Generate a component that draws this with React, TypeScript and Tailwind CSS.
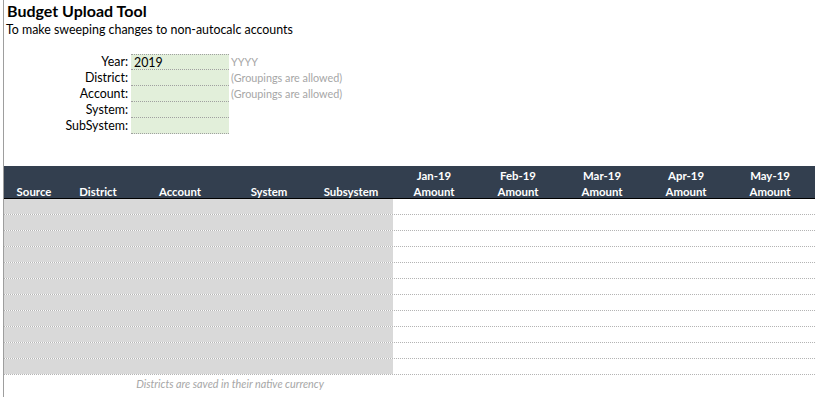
import React from "react";

const font = { fontFamily: "Lato, 'Liberation Sans', sans-serif" };

const formRows: { label: string; value: string; hint: string }[] = [
  { label: "Year:", value: "2019", hint: "YYYY" },
  { label: "District:", value: "", hint: "(Groupings are allowed)" },
  { label: "Account:", value: "", hint: "(Groupings are allowed)" },
  { label: "System:", value: "", hint: "" },
  { label: "SubSystem:", value: "", hint: "" },
];

const leftCols = [
  { name: "Source", w: "w-[60px]" },
  { name: "District", w: "w-[68px]" },
  { name: "Account", w: "w-[96px]" },
  { name: "System", w: "w-[82px]" },
  { name: "Subsystem", w: "w-[82px]" },
];

const months = ["Jan-19", "Feb-19", "Mar-19", "Apr-19", "May-19"];

export default function App() {
  return (
    <div className="w-[815px] h-[397px] bg-white overflow-hidden text-black" style={font}>
      <div className="ml-[3px] h-[397px] border-l border-[#9e9e9e] flex flex-col">
        <div className="pl-[3px] h-[21px] shrink-0 text-[16px] font-bold leading-[22px]">Budget Upload Tool</div>
        <div className="pl-[2px] h-[18px] shrink-0 text-[12.4px] leading-[18px]">To make sweeping changes to non-autocalc accounts</div>
        <div className="h-[15px] shrink-0" />
        <div className="flex flex-col text-[12.4px] shrink-0">
          {formRows.map((r, i) => (
            <div key={r.label} className="flex h-[16px] items-stretch">
              <div className="w-[125px] text-right leading-[16px] pr-[1px]">{r.label}</div>
              <div
                className={`w-[98px] ml-[2px] bg-[#e2efda] border-b border-dotted border-[#a0a0a0] leading-[15px] pl-[3px] ${
                  i === 0 ? "border-t" : ""
                }`}
              >
                {r.value}
              </div>
              <div className="pl-[2px] text-[10.8px] leading-[16px] text-[#a6a6a6]">{r.hint}</div>
            </div>
          ))}
        </div>
        <div className="h-[32px] shrink-0" />
        <div className="flex h-[33px] shrink-0 bg-[#333f4f] border-b border-black text-white font-bold text-[11.4px]">
          {leftCols.map((c) => (
            <div key={c.name} className={`${c.w} flex flex-col items-center pt-[18px] leading-[16px]`}>
              {c.name}
            </div>
          ))}
          {months.map((m) => (
            <div key={m} className="w-[84px] flex flex-col items-center pt-[2px] leading-[16px]">
              <div>{m}</div>
              <div>Amount</div>
            </div>
          ))}
        </div>
        <div className="flex flex-col shrink-0">
          {Array.from({ length: 11 }).map((_, i) => (
            <div key={i} className="flex h-[16px] border-b border-dotted border-[#b4b4b4]">
              <div className="w-[389px] bg-[#d9d9d9]" />
              <div className="flex-1" />
            </div>
          ))}
        </div>
        <div className="w-[452px] text-center italic text-[10.8px] leading-[18px] text-[#a6a6a6]">
          Districts are saved in their native currency
        </div>
      </div>
    </div>
  );
}
